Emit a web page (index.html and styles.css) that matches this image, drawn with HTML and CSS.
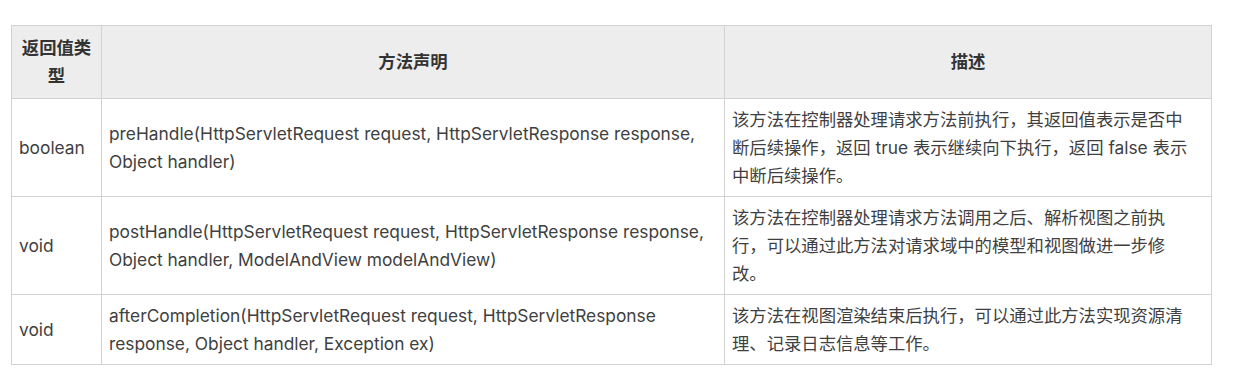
FILE: index.html
```html
<!DOCTYPE html>
<html lang="zh-CN">
<head>
<meta charset="utf-8">
<link rel="stylesheet" href="styles.css">
</head>
<body>
<div class="page">
<table class="api">
  <colgroup>
    <col class="c-type">
    <col class="c-sig">
    <col class="c-desc">
  </colgroup>
  <thead>
    <tr>
      <th>返回值类型</th>
      <th>方法声明</th>
      <th>描述</th>
    </tr>
  </thead>
  <tbody>
    <tr>
      <td>boolean</td>
      <td>preHandle(HttpServletRequest request, HttpServletResponse response, Object handler)</td>
      <td>该方法在控制器处理请求方法前执行，其返回值表示是否中断后续操作，返回 true 表示继续向下执行，返回 false 表示中断后续操作。</td>
    </tr>
    <tr>
      <td>void</td>
      <td>postHandle(HttpServletRequest request, HttpServletResponse response, Object handler, ModelAndView modelAndView)</td>
      <td>该方法在控制器处理请求方法调用之后、解析视图之前执行，可以通过此方法对请求域中的模型和视图做进一步修改。</td>
    </tr>
    <tr>
      <td>void</td>
      <td>afterCompletion(HttpServletRequest request, HttpServletResponse response, Object handler, Exception ex)</td>
      <td>该方法在视图渲染结束后执行，可以通过此方法实现资源清理、记录日志信息等工作。</td>
    </tr>
  </tbody>
</table>
</div>
</body>
</html>
```
FILE: styles.css
```css
html, body {
  margin: 0;
  padding: 0;
  background: #ffffff;
}
.page {
  padding: 25px 0 0 11px;
}
.api {
  border-collapse: collapse;
  table-layout: fixed;
  width: 1200px;
  font-family: "Inter", "Noto Sans CJK SC", sans-serif;
  font-size: 17.333px;
  line-height: 28px;
  color: #3f3f3f;
}
.c-type { width: 90px; }
.c-sig { width: 623px; }
.c-desc { width: 487px; }
.api th,
.api td {
  border: 1px solid #d2d2d2;
  padding: 7px 14px 6px 7px;
  vertical-align: middle;
  text-align: left;
}
.api th {
  background: #ededed;
  font-weight: bold;
  text-align: center;
  color: #333333;
  padding: 8px 7px;
}
```
